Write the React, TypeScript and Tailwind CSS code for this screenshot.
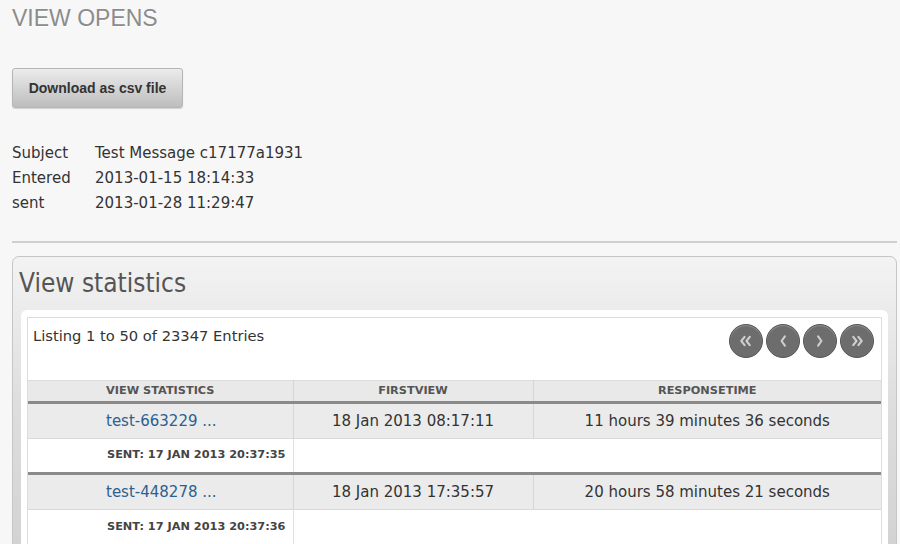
import React from "react";

const rows = [
  { name: "test-663229 ...", first: "18 Jan 2013 08:17:11", resp: "11 hours 39 minutes 36 seconds", sent: "SENT: 17 JAN 2013 20:37:35" },
  { name: "test-448278 ...", first: "18 Jan 2013 17:35:57", resp: "20 hours 58 minutes 21 seconds", sent: "SENT: 17 JAN 2013 20:37:36" },
];

const PageButton: React.FC<{ kind: "first" | "prev" | "next" | "last" }> = ({ kind }) => {
  const paths: Record<string, string[]> = {
    first: ["M15.5 12.5 L12 17 L15.5 21.5", "M21 12.5 L17.5 17 L21 21.5"],
    prev: ["M19 12 L15.5 17 L19 22"],
    next: ["M15 12 L18.5 17 L15 22"],
    last: ["M13 12.5 L16.5 17 L13 21.5", "M18.5 12.5 L22 17 L18.5 21.5"],
  };
  return (
    <div className="w-[34px] h-[34px] rounded-full bg-[#6d6d6d] border border-[#565656] flex items-center justify-center shadow-[inset_0_1px_1px_rgba(255,255,255,0.25)]">
      <svg width="34" height="34" viewBox="0 0 34 34" fill="none">
        {paths[kind].map((d, i) => (
          <path key={i} d={d} stroke="#cfcfcf" strokeWidth="2.2" strokeLinecap="round" strokeLinejoin="round" />
        ))}
      </svg>
    </div>
  );
};

const App: React.FC = () => {
  return (
    <div className="min-h-screen bg-[#f7f7f7] pl-3 pr-[3px] font-['DejaVu_Sans',sans-serif] text-[#333]">
      <h1 className="pt-[5px] text-[23px] leading-[26px] text-[#8c8c8c] [text-shadow:0_1px_0_#fff] font-['Liberation_Sans',sans-serif]">VIEW OPENS</h1>

      <div className="mt-[37px] w-[171px] h-[40px] rounded-[3px] border border-[#b5b5b5] bg-gradient-to-b from-[#ececec] to-[#bdbdbd] flex items-center justify-center text-[14px] font-bold text-[#333] shadow-[0_1px_1px_rgba(0,0,0,0.15)] font-['Liberation_Sans',sans-serif]">
        Download as csv file
      </div>

      <div className="mt-[33px] text-[15px] leading-[25px] text-[#333]">
        <div className="flex"><span className="w-[83px]">Subject</span><span>Test Message c17177a1931</span></div>
        <div className="flex"><span className="w-[83px]">Entered</span><span>2013-01-15 18:14:33</span></div>
        <div className="flex"><span className="w-[83px]">sent</span><span>2013-01-28 11:29:47</span></div>
      </div>

      <div className="mt-[25px] h-[2px] bg-[#cfcfcf]" />

      <div className="mt-[13px] rounded-t-[7px] border border-[#c6c6c6] bg-gradient-to-b from-[#f3f3f3] via-[#dedede] to-[#d3d3d3]">
        <div className="h-[53px] pl-[6px] flex items-center text-[26px] text-[#555] font-['DejaVu_Sans_Condensed','DejaVu_Sans',sans-serif]">
          View statistics
        </div>
        <div className="mx-[8px] rounded-t-[6px] bg-white pt-[7px] px-[6px]">
          <div className="border border-[#dcdcdc] border-b-0">
            <div className="h-[62px] flex justify-between pl-[5px] pr-[7px]">
              <div className="pt-[9px] text-[14.7px] leading-[18px]">Listing 1 to 50 of 23347 Entries</div>
              <div className="pt-[6px] flex gap-[3px]">
                <PageButton kind="first" />
                <PageButton kind="prev" />
                <PageButton kind="next" />
                <PageButton kind="last" />
              </div>
            </div>
            <table className="w-full border-collapse text-[15px]">
              <thead>
                <tr className="bg-[#e9e9e9] h-[22px] text-[11.3px] font-bold text-[#555] border-t border-[#dcdcdc] border-b-[3px] border-b-[#8a8a8a]">
                  <th className="w-[265px] border-r border-[#d6d6d6]">VIEW STATISTICS</th>
                  <th className="w-[240px] border-r border-[#d6d6d6]">FIRSTVIEW</th>
                  <th>RESPONSETIME</th>
                </tr>
              </thead>
              <tbody>
                {rows.map((r, i) => (
                  <React.Fragment key={i}>
                    <tr className={`bg-[#ebebeb] h-[36px] ${i > 0 ? "border-t-[3px] border-[#8a8a8a]" : ""}`}>
                      <td className="pl-[78px] text-left text-[#2d5f8f] border-r border-[#d6d6d6] border-b border-b-[#d9d9d9]">{r.name}</td>
                      <td className="text-center border-r border-[#d6d6d6] border-b border-b-[#d9d9d9]">{r.first}</td>
                      <td className="text-center border-b border-b-[#d9d9d9]">{r.resp}</td>
                    </tr>
                    <tr className="bg-white h-[35px]">
                      <td className="pl-[79px] text-left text-[11.3px] font-bold text-[#444] border-r border-[#e0e0e0] whitespace-nowrap">{r.sent}</td>
                      <td colSpan={2} />
                    </tr>
                  </React.Fragment>
                ))}
              </tbody>
            </table>
          </div>
        </div>
      </div>
    </div>
  );
};

export default App;
